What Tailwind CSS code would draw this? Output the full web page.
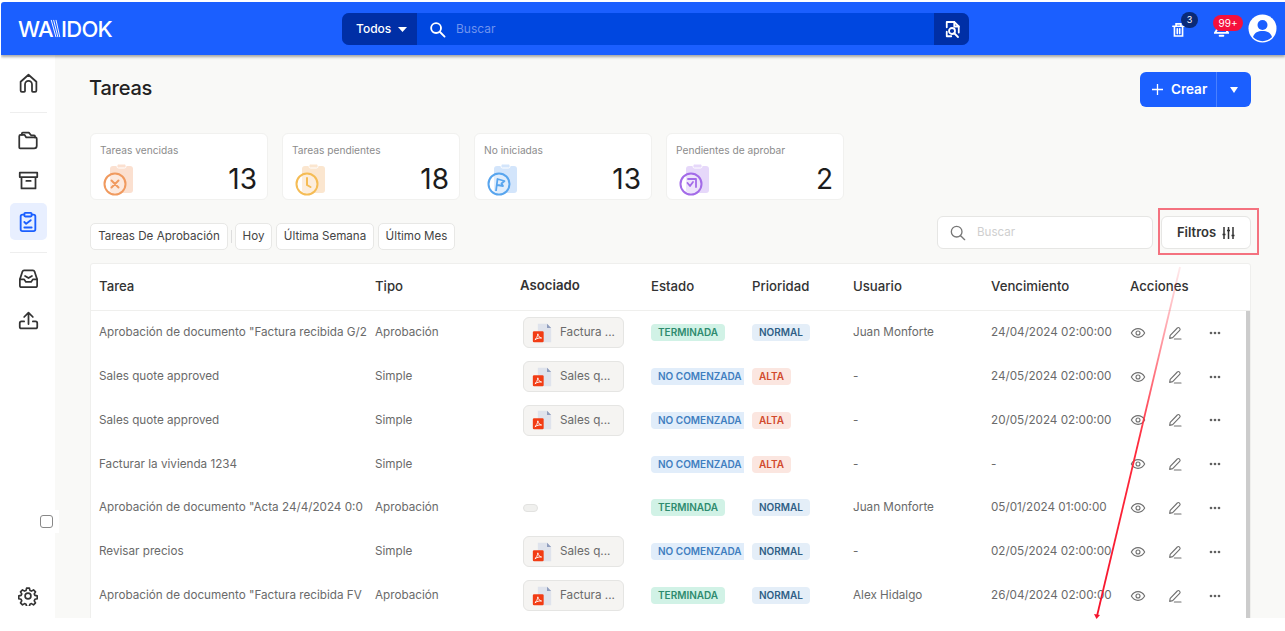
<!DOCTYPE html>
<html lang="es">
<head>
<meta charset="utf-8">
<title>Tareas</title>
<script src="https://cdn.jsdelivr.net/npm/@tailwindcss/browser@4"></script>
</head>
<body class="bg-white overflow-hidden font-['Inter','Liberation_Sans',sans-serif]">
<svg class="hidden">
  <symbol id="pdf" viewBox="0 0 24 24">
    <path d="M7 1h11l5 5v17H7z" fill="#dfe3ec"/><path d="M18 1l5 5h-5z" fill="#8f9dbd"/>
    <rect x="1" y="10" width="13" height="13" rx="1.5" fill="#f23c14"/>
    <path d="M3.5 20c2-1 3-4 3.500-7 .5 3 2 4.500 4.500 5-3-.3-5.500.5-8 2z" fill="none" stroke="#fff" stroke-width="1.100"/>
  </symbol>
  <symbol id="eye" viewBox="0 0 24 24" fill="none" stroke="#707070" stroke-width="1.700" stroke-linecap="round" stroke-linejoin="round">
    <path d="M2 12c2.500-4.500 6-6.500 10-6.500s7.500 2 10 6.500c-2.500 4.500-6 6.500-10 6.500S4.500 16.500 2 12z"/><circle cx="12" cy="12" r="3"/>
  </symbol>
  <symbol id="pen" viewBox="0 0 24 24" fill="none" stroke="#707070" stroke-width="1.700" stroke-linecap="round" stroke-linejoin="round">
    <path d="M4 20l.8-4.500L15.500 4.500a2 2 0 0 1 3 0l.5.5a2 2 0 0 1 0 3L8.500 19z"/><path d="M11 21h10"/>
  </symbol>
  <symbol id="dots" viewBox="0 0 24 24" fill="#606060"><circle cx="6" cy="12" r="2"/><circle cx="12" cy="12" r="2"/><circle cx="18" cy="12" r="2"/></symbol>
</svg>

<div class="relative w-[1285px] h-[631px] pl-[1px] pt-[2px]">
  <div class="h-[616px] flex flex-col overflow-hidden">
    <!-- top bar -->
    <header class="relative z-10 h-[53px] shrink-0 bg-[#1b5fff] shadow-[0_2px_3px_rgba(0,0,0,0.35)] rounded-tl-[3px] flex items-center pr-[8px]">
      <div class="w-[341px] pl-[17px] flex items-center text-white text-[22px] leading-none font-medium tracking-[-0.7px]">
        <span>WA</span>
        <svg class="w-[11px] h-[19px] mx-[-3px]" viewBox="0 0 11 20" fill="none" stroke="#fff" stroke-width="1"><path d="M1 1l5 18M3.500 1l4.500 18M6 1l4 18"/></svg>
        <span class="ml-[3px]">IDOK</span>
      </div>
      <div class="w-[627px] h-[32px] rounded-[7px] overflow-hidden flex bg-[#0047e0] mt-[1px]">
        <div class="w-[75px] bg-[#002fa6] flex items-center pl-[14px] gap-[7px] text-white text-[12px] font-medium">Todos
          <svg class="w-[9px] h-[5px]" viewBox="0 0 9 5"><path d="M0 0h9L4.500 5z" fill="#fff"/></svg>
        </div>
        <div class="flex-1 flex items-center pl-[12px] gap-[10px]">
          <svg class="w-[17px] h-[17px]" viewBox="0 0 24 24" fill="none" stroke="#fff" stroke-width="2.600" stroke-linecap="round"><circle cx="10" cy="10" r="7"/><path d="M15.500 15.500L22 22"/></svg>
          <span class="text-[12px] text-[#6f93ee]">Buscar</span>
        </div>
        <div class="w-[35px] bg-[#002fa6] flex items-center justify-center">
          <svg class="w-[18px] h-[19px]" viewBox="0 0 24 24" fill="none" stroke="#fff" stroke-width="2.400" stroke-linecap="round" stroke-linejoin="round"><path d="M5 9V2h10l6 6v8"/><path d="M5 15v6h6"/><path d="M15 2v6h6"/><circle cx="12" cy="14" r="4"/><path d="M15 17l5 5"/></svg>
        </div>
      </div>
      <div class="flex-1 flex items-center justify-end relative h-full">
        <div class="absolute left-[203px] top-[20px]">
          <svg class="w-[13px] h-[15px]" viewBox="0 0 16 18" fill="none" stroke="#fff" stroke-width="2" stroke-linecap="round"><path d="M1 5h14M5 5V2h6v3M3 5v12h10V5M6.500 8v6M9.500 8v6"/></svg>
        </div>
        <div class="absolute left-[212px] top-[10px] w-[17px] h-[16px] rounded-full bg-[#0a2a78] text-white text-[9px] flex items-center justify-center">3</div>
        <div class="absolute left-[245px] top-[22px]">
          <svg class="w-[15px] h-[14px]" viewBox="0 0 16 14" fill="none" stroke="#fff" stroke-width="2" stroke-linecap="round"><path d="M3 0v6L1 9h14l-2-3V0M6 12h4"/></svg>
        </div>
        <div class="absolute left-[244px] top-[13px] w-[30px] h-[16px] rounded-full bg-[#f5103c] text-white text-[10px] leading-none flex items-center justify-center">99+</div>
        <svg class="w-[29px] h-[29px]" viewBox="0 0 29 29"><circle cx="14.500" cy="14.500" r="14" fill="#fff"/><circle cx="14.500" cy="11" r="5" fill="#1b5fff"/><path d="M5 23c1.500-4.500 5-6 9.500-6s8 1.500 9.500 6a13 13 0 0 1-19 0z" fill="#1b5fff"/></svg>
      </div>
    </header>

    <div class="flex flex-1 min-h-0">
      <!-- sidebar -->
      <aside class="relative w-[54px] shrink-0 bg-white flex flex-col items-center pt-[18px]">
        <svg class="w-[21px] h-[21px] text-[#333]" viewBox="0 0 24 24" fill="none" stroke="currentColor" stroke-width="2" stroke-linecap="round" stroke-linejoin="round"><path d="M3 20V10l9-8 9 8v10a1.500 1.500 0 0 1-1.500 1.500H17a1 1 0 0 1-1-1V13a4 4 0 0 0-8 0v7.500a1 1 0 0 1-1 1H4.500A1.500 1.500 0 0 1 3 20z"/></svg>
        <div class="w-[37px] h-px bg-[#eeeeee] mt-[18px] mb-[17px]"></div>
        <svg class="w-[22px] h-[21px] text-[#333]" viewBox="0 0 24 24" fill="none" stroke="currentColor" stroke-width="2" stroke-linecap="round" stroke-linejoin="round"><path d="M3 21a1 1 0 0 1-1-1V7a1.500 1.500 0 0 1 1.500-1.500H8l2 3h10.500A1.500 1.500 0 0 1 22 10v8a3 3 0 0 1-3 3z"/><path d="M5 5.500V4a1 1 0 0 1 1-1h7l2.500 3h3.500a1 1 0 0 1 1 1v1.500"/></svg>
        <svg class="w-[21px] h-[21px] mt-[19px] text-[#333]" viewBox="0 0 24 24" fill="none" stroke="currentColor" stroke-width="2" stroke-linecap="round" stroke-linejoin="round"><path d="M2 3h20v5H2zM4 8v13h16V8M9.500 12.500h5"/></svg>
        <div class="w-[37px] h-[37px] rounded-[5px] bg-[#e8efff] flex items-center justify-center mt-[12px]">
          <svg class="w-[20px] h-[22px]" viewBox="0 0 20 24" fill="none" stroke="#1b5fff" stroke-width="2" stroke-linecap="round" stroke-linejoin="round"><path d="M6 4H4a2 2 0 0 0-2 2v14a2 2 0 0 0 2 2h12a2 2 0 0 0 2-2V6a2 2 0 0 0-2-2h-2"/><rect x="6" y="2" width="8" height="4" rx="1"/><path d="M6 12l2 2 5-4M6 18h8"/></svg>
        </div>
        <div class="w-[37px] h-px bg-[#eeeeee] mt-[12px] mb-[16px]"></div>
        <svg class="w-[21px] h-[19px] text-[#333]" viewBox="0 0 24 22" fill="none" stroke="currentColor" stroke-width="2" stroke-linecap="round" stroke-linejoin="round"><path d="M2 12l3-9a2 2 0 0 1 2-1.500h10A2 2 0 0 1 19 3l3 9v7a2 2 0 0 1-2 2H4a2 2 0 0 1-2-2z"/><path d="M2 12h5l2 3h6l2-3h5M8 8l4 2.500L16 8"/></svg>
        <svg class="w-[21px] h-[21px] mt-[22px] text-[#333]" viewBox="0 0 24 24" fill="none" stroke="currentColor" stroke-width="2" stroke-linecap="round" stroke-linejoin="round"><path d="M12 16V3M7 8l5-5 5 5"/><path d="M7 13H4a2 2 0 0 0-2 2v4a2 2 0 0 0 2 2h16a2 2 0 0 0 2-2v-4a2 2 0 0 0-2-2h-3"/></svg>
        <div class="absolute left-[37px] top-[455px] w-[21px] h-[23px] bg-white flex items-center"><div class="w-[13px] h-[13px] ml-[2px] rounded-[3px] border border-[#888] bg-white"></div></div>
        <svg class="absolute left-[17px] top-[531px] w-[20px] h-[20px] text-[#333]" viewBox="0 0 24 24" fill="none" stroke="currentColor" stroke-width="2" stroke-linecap="round" stroke-linejoin="round"><circle cx="12" cy="12" r="3.500"/><path d="M10.300 2.500h3.400l.6 2.800 1.900.8 2.400-1.500 2.400 2.400-1.500 2.400.8 1.900 2.800.6v3.400l-2.800.6-.8 1.900 1.500 2.400-2.400 2.400-2.400-1.500-1.900.8-.6 2.800h-3.400l-.6-2.800-1.900-.8-2.400 1.500-2.400-2.400 1.500-2.400-.8-1.900-2.800-.6v-3.400l2.800-.6.8-1.900-1.500-2.400 2.400-2.400 2.400 1.500 1.900-.8z"/></svg>
      </aside>

      <!-- main -->
      <main class="flex-1 min-w-0 bg-[#f9f9f7] pl-[35px] pr-[34px] pt-[17px] overflow-hidden">
        <div class="flex items-center justify-between h-[35px]">
          <h1 class="text-[20px] font-medium text-[#222] tracking-[-0.2px] -mt-[3px] -ml-[1px]">Tareas</h1>
          <div class="w-[111px] h-[35px] rounded-[6px] bg-[#1b5fff] flex text-white">
            <div class="w-[77px] flex items-center pl-[11px] gap-[7px] text-[13.500px] font-semibold border-r border-[#4a80ff]">
              <svg class="w-[13px] h-[13px]" viewBox="0 0 13 13" stroke="#fff" stroke-width="1.300"><path d="M6.500 1v11M1 6.500h11"/></svg>Crear
            </div>
            <div class="flex-1 flex items-center justify-center"><svg class="w-[8px] h-[6px]" viewBox="0 0 8 6"><path d="M0 0h8L4 6z" fill="#fff"/></svg></div>
          </div>
        </div>

        <!-- stats -->
        <div class="flex gap-[14px] mt-[26px]">
          <div class="w-[178px] h-[67px] bg-white rounded-[6px] border border-[#f1f1ef] pl-[9px] pr-[10px] pt-[10px] relative">
            <div class="text-[10.200px] leading-[13px] text-[#8c8c8c]">Tareas vencidas</div>
            <svg class="absolute left-[12px] top-[30px] w-[31px] h-[33px]" viewBox="0 0 31 33"><rect x="7" y="2" width="23" height="27" rx="3" fill="#fbe0d0"/><rect x="14" y="0" width="9" height="4" rx="1.500" fill="#fbe0d0" stroke="#fff"/><circle cx="12" cy="20" r="10.500" fill="#fff" fill-opacity="0.300" stroke="#f09a5f" stroke-width="2"/><path d="M8.500 16.500l7 7M15.500 16.500l-7 7" stroke="#f09a5f" stroke-width="2" stroke-linecap="round"/></svg>
            <div class="absolute right-[10px] top-[27px] text-[28px] leading-[36px] text-[#1c1c1c]">13</div>
          </div>
          <div class="w-[178px] h-[67px] bg-white rounded-[6px] border border-[#f1f1ef] pl-[9px] pr-[10px] pt-[10px] relative">
            <div class="text-[10.200px] leading-[13px] text-[#8c8c8c]">Tareas pendientes</div>
            <svg class="absolute left-[12px] top-[30px] w-[31px] h-[33px]" viewBox="0 0 31 33"><rect x="7" y="2" width="23" height="27" rx="3" fill="#fbe6cf"/><rect x="14" y="0" width="9" height="4" rx="1.500" fill="#fbe6cf" stroke="#fff"/><circle cx="12" cy="20" r="10.500" fill="#fff" fill-opacity="0.300" stroke="#f5bc55" stroke-width="2"/><path d="M12 14v7l3.500 2" fill="none" stroke="#f5bc55" stroke-width="2" stroke-linecap="round"/></svg>
            <div class="absolute right-[10px] top-[27px] text-[28px] leading-[36px] text-[#1c1c1c]">18</div>
          </div>
          <div class="w-[178px] h-[67px] bg-white rounded-[6px] border border-[#f1f1ef] pl-[9px] pr-[10px] pt-[10px] relative">
            <div class="text-[10.200px] leading-[13px] text-[#8c8c8c]">No iniciadas</div>
            <svg class="absolute left-[12px] top-[30px] w-[31px] h-[33px]" viewBox="0 0 31 33"><rect x="7" y="2" width="23" height="27" rx="3" fill="#d3e5fb"/><rect x="14" y="0" width="9" height="4" rx="1.500" fill="#d3e5fb" stroke="#fff"/><circle cx="12" cy="20" r="10.500" fill="#fff" fill-opacity="0.300" stroke="#58a5ee" stroke-width="2"/><path d="M9 27l1.500-12 7 2-3 2.500 1.500 2.500-5.500-1" fill="none" stroke="#58a5ee" stroke-width="1.800" stroke-linejoin="round"/></svg>
            <div class="absolute right-[10px] top-[27px] text-[28px] leading-[36px] text-[#1c1c1c]">13</div>
          </div>
          <div class="w-[178px] h-[67px] bg-white rounded-[6px] border border-[#f1f1ef] pl-[9px] pr-[10px] pt-[10px] relative">
            <div class="text-[10.200px] leading-[13px] text-[#8c8c8c]">Pendientes de aprobar</div>
            <svg class="absolute left-[12px] top-[30px] w-[31px] h-[33px]" viewBox="0 0 31 33"><rect x="7" y="2" width="23" height="27" rx="3" fill="#e6d8fa"/><rect x="14" y="0" width="9" height="4" rx="1.500" fill="#e6d8fa" stroke="#fff"/><circle cx="12" cy="20" r="10.500" fill="#fff" fill-opacity="0.300" stroke="#a36be8" stroke-width="2"/><path d="M9 15h8v8M8.500 19l2.500 3 3-4" fill="none" stroke="#a36be8" stroke-width="1.800" stroke-linecap="round" stroke-linejoin="round"/></svg>
            <div class="absolute right-[10px] top-[27px] text-[28px] leading-[36px] text-[#1c1c1c]">2</div>
          </div>
        </div>

        <!-- filter bar -->
        <div class="flex items-start justify-between mt-[16px] h-[33px]">
          <div class="flex items-center mt-[7px] text-[11.600px] text-[#444]">
            <div class="h-[27px] w-[138px] flex items-center justify-center bg-white rounded-[5px] border border-[#e8e8e6]">Tareas De Aprobación</div>
            <div class="w-px h-[13px] bg-[#dddddd] mx-[3px]"></div>
            <div class="h-[27px] w-[37px] flex items-center justify-center bg-white rounded-[5px] border border-[#e8e8e6]">Hoy</div>
            <div class="h-[27px] w-[98px] flex items-center justify-center bg-white rounded-[5px] border border-[#e8e8e6] ml-[4px]">Última Semana</div>
            <div class="h-[27px] w-[77px] flex items-center justify-center bg-white rounded-[5px] border border-[#e8e8e6] ml-[4px]">Último Mes</div>
          </div>
          <div class="flex gap-[8px]">
            <div class="w-[216px] h-[33px] bg-white rounded-[6px] border border-[#e6e6e4] flex items-center pl-[12px] gap-[11px]">
              <svg class="w-[16px] h-[16px]" viewBox="0 0 24 24" fill="none" stroke="#777" stroke-width="2" stroke-linecap="round"><circle cx="10" cy="10" r="8"/><path d="M16 16l6 6"/></svg>
              <span class="text-[11.600px] text-[#cfcfcf]">Buscar</span>
            </div>
            <div class="w-[90px] h-[33px] bg-white rounded-[6px] border border-[#e6e6e4] flex items-center justify-center gap-[6px] text-[13px] font-semibold text-[#333]">Filtros
              <svg class="w-[13px] h-[12px]" viewBox="0 0 13 12" stroke="#333" stroke-width="1.500" fill="none"><path d="M2 0v12M6.500 0v12M11 0v12M.5 7.500h3M5 3.500h3M9.500 8.500h3"/></svg>
            </div>
          </div>
        </div>

        <!-- table -->
        <div class="relative mt-[14px] w-[1161px] h-[400px] bg-white border border-[#efefed] rounded-t-[3px] overflow-hidden">
          <div class="grid grid-cols-[276px_145px_131px_101px_101px_138px_139px_1fr] pl-[8px] h-[47px] items-center border-b border-[#efefed] text-[13.200px] font-medium text-[#333]">
            <div>Tarea</div><div>Tipo</div><div class="font-semibold -mt-[2px]">Asociado</div><div>Estado</div><div>Prioridad</div><div>Usuario</div><div>Vencimiento</div><div>Acciones</div>
          </div>
          <div class="absolute right-0 top-[47px] bottom-0 w-[4px] bg-[#cccccc]"></div>

          <div class="grid grid-cols-[276px_145px_131px_101px_101px_138px_139px_1fr] pl-[8px] h-[43.800px] items-center text-[11.700px] text-[#6a6a6a]">
            <div class="whitespace-nowrap">Aprobación de documento "Factura recibida G/2</div><div>Aprobación</div>
            <div class="pl-[3px]"><div class="w-[101px] h-[31px] rounded-[6px] bg-[#f5f4f2] border border-[#e5e5e3] flex items-center pl-[8px] gap-[8px]"><svg class="w-[20px] h-[22px]"><use href="#pdf"/></svg>Factura ...</div></div>
            <div><span class="inline-flex h-[17px] px-[7px] items-center rounded-[4px] bg-[#d1f2e6] text-[#2e8b6e] text-[10px] font-semibold">TERMINADA</span></div>
            <div><span class="inline-flex h-[17px] px-[7px] items-center rounded-[4px] bg-[#e4eef8] text-[#2f5f86] text-[10px] font-semibold">NORMAL</span></div>
            <div>Juan Monforte</div><div>24/04/2024 02:00:00</div>
            <div class="flex items-center"><svg class="w-[16px] h-[16px]"><use href="#eye"/></svg><svg class="w-[16px] h-[16px] ml-[21px]"><use href="#pen"/></svg><svg class="w-[16px] h-[16px] ml-[24px]"><use href="#dots"/></svg></div>
          </div>
          <div class="grid grid-cols-[276px_145px_131px_101px_101px_138px_139px_1fr] pl-[8px] h-[43.800px] items-center text-[11.700px] text-[#6a6a6a]">
            <div>Sales quote approved</div><div>Simple</div>
            <div class="pl-[3px]"><div class="w-[101px] h-[31px] rounded-[6px] bg-[#f5f4f2] border border-[#e5e5e3] flex items-center pl-[8px] gap-[8px]"><svg class="w-[20px] h-[22px]"><use href="#pdf"/></svg>Sales q...</div></div>
            <div class="w-[93px] overflow-hidden"><span class="inline-flex h-[17px] px-[7px] items-center rounded-[4px] bg-[#e1edfa] text-[#3f7ec0] text-[10px] font-semibold whitespace-nowrap">NO COMENZADA</span></div>
            <div><span class="inline-flex h-[17px] px-[7px] items-center rounded-[4px] bg-[#fbe6e0] text-[#d24a2c] text-[10px] font-semibold">ALTA</span></div>
            <div>-</div><div>24/05/2024 02:00:00</div>
            <div class="flex items-center"><svg class="w-[16px] h-[16px]"><use href="#eye"/></svg><svg class="w-[16px] h-[16px] ml-[21px]"><use href="#pen"/></svg><svg class="w-[16px] h-[16px] ml-[24px]"><use href="#dots"/></svg></div>
          </div>
          <div class="grid grid-cols-[276px_145px_131px_101px_101px_138px_139px_1fr] pl-[8px] h-[43.800px] items-center text-[11.700px] text-[#6a6a6a]">
            <div>Sales quote approved</div><div>Simple</div>
            <div class="pl-[3px]"><div class="w-[101px] h-[31px] rounded-[6px] bg-[#f5f4f2] border border-[#e5e5e3] flex items-center pl-[8px] gap-[8px]"><svg class="w-[20px] h-[22px]"><use href="#pdf"/></svg>Sales q...</div></div>
            <div class="w-[93px] overflow-hidden"><span class="inline-flex h-[17px] px-[7px] items-center rounded-[4px] bg-[#e1edfa] text-[#3f7ec0] text-[10px] font-semibold whitespace-nowrap">NO COMENZADA</span></div>
            <div><span class="inline-flex h-[17px] px-[7px] items-center rounded-[4px] bg-[#fbe6e0] text-[#d24a2c] text-[10px] font-semibold">ALTA</span></div>
            <div>-</div><div>20/05/2024 02:00:00</div>
            <div class="flex items-center"><svg class="w-[16px] h-[16px]"><use href="#eye"/></svg><svg class="w-[16px] h-[16px] ml-[21px]"><use href="#pen"/></svg><svg class="w-[16px] h-[16px] ml-[24px]"><use href="#dots"/></svg></div>
          </div>
          <div class="grid grid-cols-[276px_145px_131px_101px_101px_138px_139px_1fr] pl-[8px] h-[43.800px] items-center text-[11.700px] text-[#6a6a6a]">
            <div>Facturar la vivienda 1234</div><div>Simple</div>
            <div></div>
            <div class="w-[93px] overflow-hidden"><span class="inline-flex h-[17px] px-[7px] items-center rounded-[4px] bg-[#e1edfa] text-[#3f7ec0] text-[10px] font-semibold whitespace-nowrap">NO COMENZADA</span></div>
            <div><span class="inline-flex h-[17px] px-[7px] items-center rounded-[4px] bg-[#fbe6e0] text-[#d24a2c] text-[10px] font-semibold">ALTA</span></div>
            <div>-</div><div>-</div>
            <div class="flex items-center"><svg class="w-[16px] h-[16px]"><use href="#eye"/></svg><svg class="w-[16px] h-[16px] ml-[21px]"><use href="#pen"/></svg><svg class="w-[16px] h-[16px] ml-[24px]"><use href="#dots"/></svg></div>
          </div>
          <div class="grid grid-cols-[276px_145px_131px_101px_101px_138px_139px_1fr] pl-[8px] h-[43.800px] items-center text-[11.700px] text-[#6a6a6a]">
            <div class="whitespace-nowrap">Aprobación de documento "Acta 24/4/2024 0:0</div><div>Aprobación</div>
            <div class="pl-[3px]"><div class="w-[15px] h-[8px] rounded-[4px] bg-[#f0f0ee] border border-[#e2e2e0]"></div></div>
            <div><span class="inline-flex h-[17px] px-[7px] items-center rounded-[4px] bg-[#d1f2e6] text-[#2e8b6e] text-[10px] font-semibold">TERMINADA</span></div>
            <div><span class="inline-flex h-[17px] px-[7px] items-center rounded-[4px] bg-[#e4eef8] text-[#2f5f86] text-[10px] font-semibold">NORMAL</span></div>
            <div>Juan Monforte</div><div>05/01/2024 01:00:00</div>
            <div class="flex items-center"><svg class="w-[16px] h-[16px]"><use href="#eye"/></svg><svg class="w-[16px] h-[16px] ml-[21px]"><use href="#pen"/></svg><svg class="w-[16px] h-[16px] ml-[24px]"><use href="#dots"/></svg></div>
          </div>
          <div class="grid grid-cols-[276px_145px_131px_101px_101px_138px_139px_1fr] pl-[8px] h-[43.800px] items-center text-[11.700px] text-[#6a6a6a]">
            <div>Revisar precios</div><div>Simple</div>
            <div class="pl-[3px]"><div class="w-[101px] h-[31px] rounded-[6px] bg-[#f5f4f2] border border-[#e5e5e3] flex items-center pl-[8px] gap-[8px]"><svg class="w-[20px] h-[22px]"><use href="#pdf"/></svg>Sales q...</div></div>
            <div class="w-[93px] overflow-hidden"><span class="inline-flex h-[17px] px-[7px] items-center rounded-[4px] bg-[#e1edfa] text-[#3f7ec0] text-[10px] font-semibold whitespace-nowrap">NO COMENZADA</span></div>
            <div><span class="inline-flex h-[17px] px-[7px] items-center rounded-[4px] bg-[#e4eef8] text-[#2f5f86] text-[10px] font-semibold">NORMAL</span></div>
            <div>-</div><div>02/05/2024 02:00:00</div>
            <div class="flex items-center"><svg class="w-[16px] h-[16px]"><use href="#eye"/></svg><svg class="w-[16px] h-[16px] ml-[21px]"><use href="#pen"/></svg><svg class="w-[16px] h-[16px] ml-[24px]"><use href="#dots"/></svg></div>
          </div>
          <div class="grid grid-cols-[276px_145px_131px_101px_101px_138px_139px_1fr] pl-[8px] h-[43.800px] items-center text-[11.700px] text-[#6a6a6a]">
            <div class="whitespace-nowrap">Aprobación de documento "Factura recibida FV</div><div>Aprobación</div>
            <div class="pl-[3px]"><div class="w-[101px] h-[31px] rounded-[6px] bg-[#f5f4f2] border border-[#e5e5e3] flex items-center pl-[8px] gap-[8px]"><svg class="w-[20px] h-[22px]"><use href="#pdf"/></svg>Factura ...</div></div>
            <div><span class="inline-flex h-[17px] px-[7px] items-center rounded-[4px] bg-[#d1f2e6] text-[#2e8b6e] text-[10px] font-semibold">TERMINADA</span></div>
            <div><span class="inline-flex h-[17px] px-[7px] items-center rounded-[4px] bg-[#e4eef8] text-[#2f5f86] text-[10px] font-semibold">NORMAL</span></div>
            <div>Alex Hidalgo</div><div>26/04/2024 02:00:00</div>
            <div class="flex items-center"><svg class="w-[16px] h-[16px]"><use href="#eye"/></svg><svg class="w-[16px] h-[16px] ml-[21px]"><use href="#pen"/></svg><svg class="w-[16px] h-[16px] ml-[24px]"><use href="#dots"/></svg></div>
          </div>
        </div>
      </main>
    </div>
  </div>

  <!-- annotation overlay -->
  <div class="absolute left-[1158px] top-[208px] w-[101px] h-[47px] border-2 border-[#f4727f]"></div>
  <svg class="absolute left-0 top-0 w-[1285px] h-[631px] pointer-events-none" viewBox="0 0 1285 631" fill="none">
    <defs><linearGradient id="fade" gradientUnits="userSpaceOnUse" x1="1180" y1="267" x2="1097" y2="618"><stop offset="0" stop-color="#ff2a3c" stop-opacity="0.100"/><stop offset="0.500" stop-color="#ff2a3c"/><stop offset="1" stop-color="#f5142c"/></linearGradient></defs>
    <path d="M1180 267L1097 616" stroke="url(#fade)" stroke-width="1.800"/>
    <path d="M1094 614l6 1-3.500 4z" fill="#f5142c"/>
  </svg>
</div>
</body>
</html>
